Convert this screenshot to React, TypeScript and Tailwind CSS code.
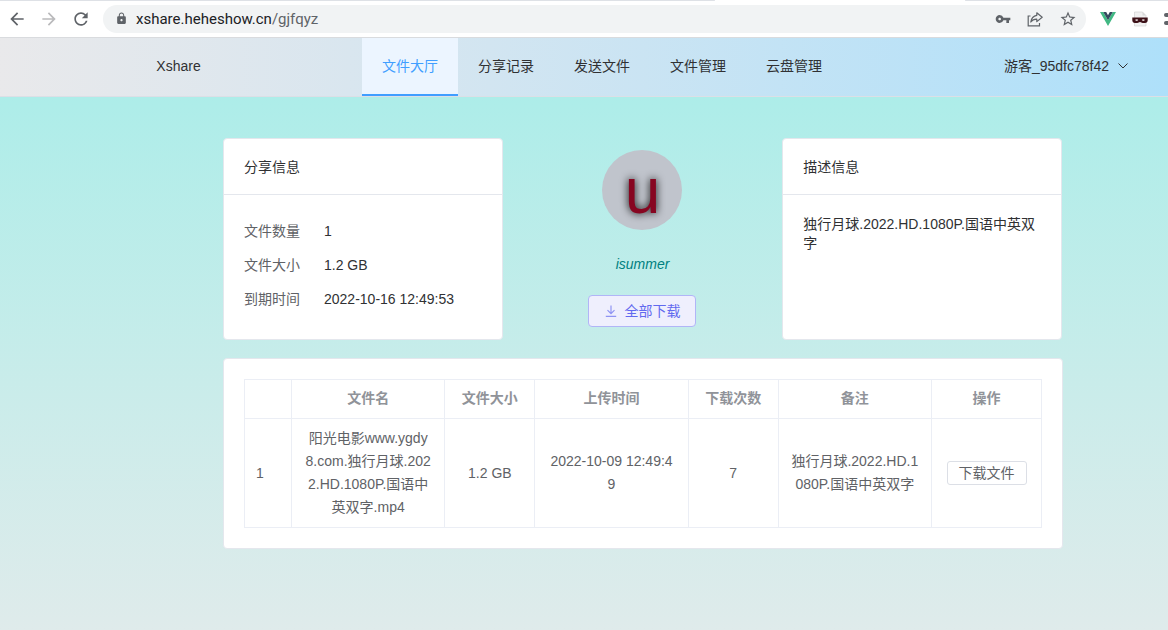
import React from "react";
import { MdArrowBack, MdArrowForward, MdRefresh, MdLock, MdVpnKey, MdStarBorder } from "react-icons/md";

const navItems = ["文件大厅", "分享记录", "发送文件", "文件管理", "云盘管理"];

const shareInfo = [
  { label: "文件数量", value: "1" },
  { label: "文件大小", value: "1.2 GB" },
  { label: "到期时间", value: "2022-10-16 12:49:53" },
];

const columns = [
  { title: "", width: "w-[48px]" },
  { title: "文件名", width: "" },
  { title: "文件大小", width: "w-[90px]" },
  { title: "上传时间", width: "" },
  { title: "下载次数", width: "w-[90px]" },
  { title: "备注", width: "" },
  { title: "操作", width: "w-[110px]" },
];

const files = [
  {
    name: "阳光电影www.ygdy8.com.独行月球.2022.HD.1080P.国语中英双字.mp4",
    size: "1.2 GB",
    uploaded: "2022-10-09 12:49:49",
    downloads: 7,
    note: "独行月球.2022.HD.1080P.国语中英双字",
  },
];

function ShareIcon() {
  return (
    <svg width="16" height="16" viewBox="0 0 16 16" fill="none" stroke="#5f6368" strokeWidth="1.2" aria-hidden="true">
      <path d="M3.500 5H1.200v9.800h11.300V12" />
      <path d="M9.800 1.800 15.200 6.200 9.800 10.600V8.200C7 8.100 5.200 9 3.800 11 4.300 7.300 6.200 4.800 9.800 4.300Z" strokeLinejoin="round" />
    </svg>
  );
}

function VueIcon() {
  return (
    <svg width="16" height="14" viewBox="0 0 16 14" aria-hidden="true">
      <path d="M0 0h3.200L8 8.300 12.800 0H16L8 14Z" fill="#41b883" />
      <path d="M3.200 0h3L8 3.200 9.800 0h3L8 8.300Z" fill="#35495e" />
    </svg>
  );
}

function MaskIcon() {
  return (
    <svg width="16" height="16" viewBox="0 0 16 16" aria-hidden="true">
      <path d="M2.500 1h8L14 4.500V15H2.500Z" fill="#f1f1f1" stroke="#cccccc" strokeWidth="0.6" />
      <path d="M10.500 1v3.500H14Z" fill="#d8d8d8" />
      <path d="M0.300 6.500h15.400v2.800c0 1.600-1 2.700-2.700 2.700h-2.200C9.500 12 9 11 8 11s-1.500 1-2.800 1H3C1.300 12 .3 10.900.3 9.300Z" fill="#3d1118" />
      <ellipse cx="4.700" cy="9.100" rx="1.500" ry="0.800" fill="#e6dcdc" />
      <ellipse cx="11.300" cy="9.100" rx="1.500" ry="0.800" fill="#e6dcdc" />
    </svg>
  );
}

function BrowserBar() {
  return (
    <div className="relative flex h-[38px] items-center border-b border-[#d9dbde] bg-white text-[#5f6368]">
      <div className="absolute inset-x-0 top-0 flex h-px justify-between">
        <span className="w-[61.2%] rounded-r-full bg-[#dee1e6]" />
        <span className="w-[17.4%] rounded-l-full bg-[#dee1e6]" />
      </div>
      <div className="flex items-center gap-3 pl-[7px]">
        <button type="button" aria-label="后退"><MdArrowBack size={20} /></button>
        <button type="button" aria-label="前进" className="text-[#bababc]"><MdArrowForward size={20} /></button>
        <button type="button" aria-label="刷新"><MdRefresh size={20} /></button>
      </div>
      <div className="ml-3 flex h-7 flex-1 items-center rounded-full bg-[#f1f3f4] pl-3 pr-[9px]">
        <MdLock size={13} />
        <div className="ml-2 flex-1 font-[Roboto,sans-serif] text-[15px] leading-5">
          <span className="text-[#202124]">xshare.heheshow.cn</span>/gjfqyz
        </div>
        <div className="flex items-center gap-4">
          <button type="button" aria-label="密码"><MdVpnKey size={16} /></button>
          <button type="button" aria-label="分享"><ShareIcon /></button>
          <button type="button" aria-label="收藏"><MdStarBorder size={18} /></button>
        </div>
      </div>
      <div className="flex items-center gap-4 pl-[14px]">
        <button type="button" aria-label="Vue"><VueIcon /></button>
        <button type="button" aria-label="扩展"><MaskIcon /></button>
        <span className="flex w-1 flex-col gap-1 overflow-hidden">
          <i className="h-1 w-2 rounded-l-full bg-[#5f6368]" />
          <i className="h-1 w-2 rounded-l-full bg-[#5f6368]" />
        </span>
      </div>
    </div>
  );
}

function SiteHeader() {
  return (
    <header className="flex h-[59px] items-stretch border-b border-[#dcdfe6] bg-linear-to-r from-[#e9e9eb] via-[#d9e6ef] via-30% to-[#aee0fa]">
      <div className="flex w-[31%] items-center justify-center pb-[2px] pr-[5px]">Xshare</div>
      <nav className="flex">
        {navItems.map((item, i) => (
          <a
            key={item}
            href="#"
            className={
              i === 0
                ? "flex items-center border-b-2 border-[#409eff] bg-[#ecf5ff] px-5 text-[#409eff]"
                : "flex items-center border-b-2 border-transparent px-5"
            }
          >
            {item}
          </a>
        ))}
      </nav>
      <button type="button" className="ml-auto mr-[39px] flex items-center gap-2 pb-[2px]">
        游客_95dfc78f42
        <svg width="12" height="12" viewBox="0 0 12 12" fill="none" stroke="#303133" aria-hidden="true">
          <path d="m1.500 3.500 4.500 4.500 4.500-4.500" />
        </svg>
      </button>
    </header>
  );
}

function Card({ title, children }: { title: string; children: React.ReactNode }) {
  return (
    <section className="rounded border border-[#e4e7ed] bg-white">
      <h2 className="border-b border-[#e4e7ed] px-5 pb-[17px] pt-[18px] leading-5">{title}</h2>
      <div className="p-5">{children}</div>
    </section>
  );
}

function FileTable() {
  const cell = "border-b border-r border-[#ebeef5] px-3 py-2 first:border-l first:pl-[11px] first:text-left";
  return (
    <table className="w-full table-fixed border-separate border-spacing-0 text-center leading-[23px] text-[#606266]">
      <thead className="text-[#909399]">
        <tr>
          {columns.map((c, i) => (
            <th key={i} className={`border-b border-r border-t border-[#ebeef5] px-3 pb-2 pt-[7px] font-bold first:border-l ${c.width}`}>
              {c.title}
            </th>
          ))}
        </tr>
      </thead>
      <tbody>
        {files.map((f, i) => (
          <tr key={f.name} className="break-all">
            <td className={cell}>{i + 1}</td>
            <td className={cell}>{f.name}</td>
            <td className={cell}>{f.size}</td>
            <td className={cell}>{f.uploaded}</td>
            <td className={cell}>{f.downloads}</td>
            <td className={cell}>{f.note}</td>
            <td className={cell}>
              <button type="button" className="h-6 rounded-[3px] border border-[#dcdfe6] bg-white px-[11px] align-middle leading-[22px]">
                下载文件
              </button>
            </td>
          </tr>
        ))}
      </tbody>
    </table>
  );
}

export default function App() {
  return (
    <div className="flex min-h-screen flex-col font-['Liberation_Sans','Noto_Sans_CJK_SC',sans-serif] text-[14px] leading-5 text-[#303133]">
      <BrowserBar />
      <SiteHeader />
      <main className="flex-1 bg-linear-to-b from-[#adede9] to-[#dfebeb] pb-10 pl-[223px] pr-[105px] pt-[41px]">
        <div className="grid grid-cols-3 pr-px">
          <Card title="分享信息">
            <dl className="pb-[2px]">
              {shareInfo.map((row) => (
                <div key={row.label} className="flex h-[34px] items-center pb-[2px]">
                  <dt className="w-20 text-[#606266]">{row.label}</dt>
                  <dd>{row.value}</dd>
                </div>
              ))}
            </dl>
          </Card>
          <div className="flex flex-col items-center pt-3">
            <div className="flex size-20 items-center justify-center rounded-full bg-[#c0c4cc] pt-[2px] text-[64px] text-[#870621] [text-shadow:0_0_8px_#000000]">
              u
            </div>
            <p className="mt-6 italic text-[#008080]">isummer</p>
            <button type="button" className="mt-[21px] flex h-8 items-center gap-[6px] rounded border border-[#b1b5f7] bg-[#efeffd] px-[15px] text-[#626aef]">
              <svg width="14" height="14" viewBox="0 0 14 14" fill="none" stroke="#8f94f3" strokeWidth="1.2" aria-hidden="true">
                <path d="M7 1.500v8M3.500 6.200 7 9.700l3.500-3.500M1.800 12.400h10.400" />
              </svg>
              全部下载
            </button>
          </div>
          <Card title="描述信息">
            <p className="break-all leading-[19px]">独行月球.2022.HD.1080P.国语中英双字</p>
          </Card>
        </div>
        <section className="mt-[18px] rounded border border-[#e4e7ed] bg-white p-5">
          <FileTable />
        </section>
      </main>
    </div>
  );
}
